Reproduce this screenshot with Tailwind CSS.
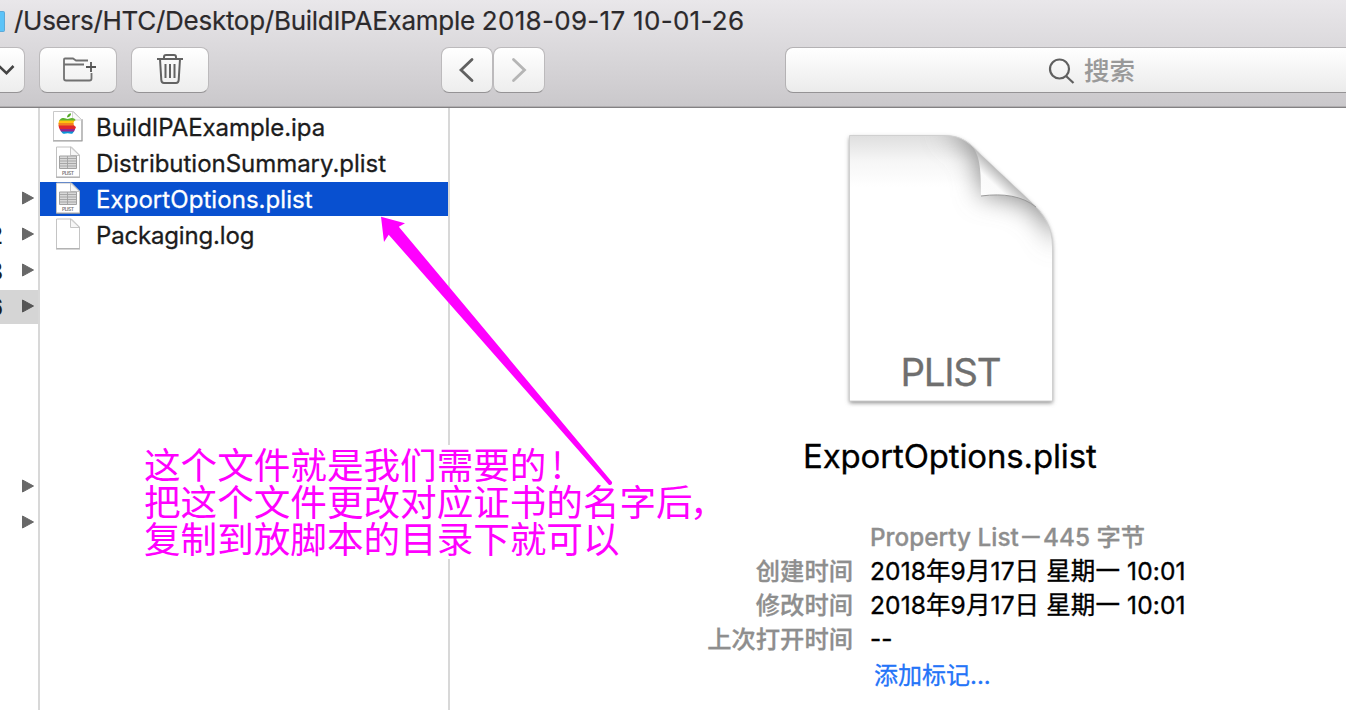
<!DOCTYPE html>
<html lang="zh-CN">
<head>
<meta charset="utf-8">
<title>BuildIPAExample</title>
<script src="https://cdn.jsdelivr.net/npm/@tailwindcss/browser@4"></script>
</head>
<body class="relative flex h-[710px] w-[1346px] flex-col overflow-hidden bg-white font-[Inter,'Noto_Sans_CJK_SC',sans-serif] text-[#1c1c1c]">

<svg class="absolute size-0">
  <defs>
    <linearGradient id="fold" x1="0" y1="1" x2="1" y2="0"><stop offset="0" stop-color="#fff"/><stop offset=".35" stop-color="#fafafa"/><stop offset=".5" stop-color="#bdbdbd"/></linearGradient>
    <symbol id="plist" viewBox="0 0 26 34">
      <path d="M1.500 1h15l8 8v22h-23z" fill="#fff" stroke="#c2c2c2"/>
      <path d="M1 31.300h24" stroke="#999" stroke-width=".8"/>
      <path d="M15.500 1v8.500h9z" fill="#f7f7f7" stroke="#b9b9b9" stroke-width=".8"/>
      <path d="M4.500 10h17v12.500h-17z" fill="#d8d8d8" stroke="#a2a2a2"/>
      <path d="M4.500 12.500h17M4.500 15h17M4.500 17.500h17M4.500 20h17M12.500 10v12" stroke="#a2a2a2" stroke-width=".9"/>
      <text x="13" y="29" text-anchor="middle" font-size="5" font-weight="600" textLength="12" fill="#777">PLIST</text>
    </symbol>
  </defs>
</svg>

<header class="flex h-[108px] shrink-0 flex-col border-b border-[#838183] bg-linear-to-b from-[#e9e7ea] to-[#cac8cb] shadow-[inset_0_-1px_0_#b0aeb0]">
  <div class="flex h-[42px] items-center">
    <span class="h-[21px] w-[5px] rounded-r-[2px] border-y border-r border-[#5da9d8] bg-[#5cc3f8]"></span>
    <span class="ml-[9px] text-[26px] leading-[42px] tracking-[-0.28px] whitespace-nowrap text-[#2c2a2c] [-webkit-text-stroke:0.2px]">/Users/HTC/Desktop/BuildIPAExample <span class="tracking-[0.3px]">2018-09-17 10-01-26</span></span>
  </div>
  <div class="flex h-[56px] items-center">
    <div class="flex h-[46px] w-[25px] items-center overflow-hidden rounded-r-[8px] border border-l-0 border-[#bcbabc] border-b-[#959395] bg-linear-to-b from-white to-[#ededed]">
      <svg class="h-[12px] w-[15px]" viewBox="0 0 15 12" fill="none" stroke="#444" stroke-width="2.600"><path d="M-1 2l7.500 7.200L13.500 2"/></svg>
    </div>
    <div class="ml-[14px] flex h-[46px] w-[78px] items-center justify-center rounded-[8px] border border-[#bcbabc] border-b-[#959395] bg-linear-to-b from-white to-[#ededed]">
      <svg class="h-[28px] w-[36px]" viewBox="0 0 36 28" fill="none" stroke="#717171" stroke-width="1.800"><path d="M28 4.500H16L13 2.500H5Q4 2.500 4 3.500V22.500Q4 24.500 6 24.500H29.500Q31.500 24.500 31.500 22.500V17M4 8.500H24"/><path d="M31 6v10M26 11h10" stroke="#555"/></svg>
    </div>
    <div class="ml-[14px] flex h-[46px] w-[78px] items-center justify-center rounded-[8px] border border-[#bcbabc] border-b-[#959395] bg-linear-to-b from-white to-[#ededed]">
      <svg class="h-[34px] w-[28px]" viewBox="0 2 28 34" fill="none" stroke="#626262" stroke-width="2"><path d="M1 8h26M8 8V6Q8 4 10 4h8Q20 4 20 6v2M4 8l1.300 21Q5.500 32 8 32h12Q22.500 32 22.700 29L24 8M9.500 13v14M14 13v14M18.500 13v14"/></svg>
    </div>
    <div class="ml-[232px] flex h-[46px] w-[52px] items-center justify-center rounded-[8px] border border-[#bcbabc] border-b-[#959395] bg-linear-to-b from-white to-[#ededed]">
      <svg class="h-[26px] w-[18px]" viewBox="0 0 18 26" fill="none" stroke="#606060" stroke-width="2.800" stroke-linecap="round"><path d="M14 2.500L3 13l11 10.500"/></svg>
    </div>
    <div class="flex h-[46px] w-[52px] items-center justify-center rounded-[8px] border border-[#bcbabc] border-b-[#959395] bg-linear-to-b from-white to-[#ededed]">
      <svg class="h-[26px] w-[18px]" viewBox="0 0 18 26" fill="none" stroke="#b5b5b5" stroke-width="2.800" stroke-linecap="round"><path d="M3.500 2.500L14.500 13 3.500 23.500"/></svg>
    </div>
    <div class="ml-[240px] flex h-[46px] w-[561px] shrink-0 items-center rounded-l-[8px] border border-r-0 border-[#b4b2b4] border-b-[#959395] bg-linear-to-b from-white to-[#ebebeb]">
      <svg class="ml-[261px] h-[30px] w-[28px]" viewBox="0 0 28 30" fill="none" stroke="#606060" stroke-width="2.200"><ellipse cx="12.500" cy="14" rx="9.500" ry="9.500"/><path d="M19 21L26.500 28"/></svg>
      <span class="mt-0.5 ml-[9px] text-[25.500px] leading-[44px] font-medium text-[#999] [-webkit-text-stroke:0.1px]">搜索</span>
    </div>
  </div>
</header>

<main class="flex min-h-0 flex-1">
  <aside class="flex w-[40px] shrink-0 flex-col overflow-hidden border-r-2 border-[#d8d8d8] pt-[74px] text-[24px] font-medium">
    <div class="flex h-[34px] items-center justify-end pr-1 pb-0.5"><svg class="h-[14px] w-[12px]" viewBox="0 0 12 14"><path d="M.5 1l11 6-11 6z" fill="#686868" stroke="#686868" stroke-linejoin="round"/></svg></div>
    <div class="mt-0.5 flex h-[34px] items-center justify-between pr-1 pb-0.5"><span class="flex w-[3px] justify-end pt-1">2</span><svg class="h-[14px] w-[12px]" viewBox="0 0 12 14"><path d="M.5 1l11 6-11 6z" fill="#686868" stroke="#686868" stroke-linejoin="round"/></svg></div>
    <div class="mt-0.5 flex h-[34px] items-center justify-between pr-1 pb-0.5"><span class="flex w-[3px] justify-end pt-1">8</span><svg class="h-[14px] w-[12px]" viewBox="0 0 12 14"><path d="M.5 1l11 6-11 6z" fill="#686868" stroke="#686868" stroke-linejoin="round"/></svg></div>
    <div class="mt-0.5 flex h-[34px] items-center justify-between bg-[#d5d5d5] pr-1 pb-0.5"><span class="flex w-[3px] justify-end pt-1">6</span><svg class="h-[14px] w-[12px]" viewBox="0 0 12 14"><path d="M.5 1l11 6-11 6z" fill="#555" stroke="#555" stroke-linejoin="round"/></svg></div>
    <div class="mt-[146px] flex h-[34px] items-center justify-end pr-1 pb-0.5"><svg class="h-[14px] w-[12px]" viewBox="0 0 12 14"><path d="M.5 1l11 6-11 6z" fill="#686868" stroke="#686868" stroke-linejoin="round"/></svg></div>
    <div class="mt-0.5 flex h-[34px] items-center justify-end pr-1 pb-0.5"><svg class="h-[14px] w-[12px]" viewBox="0 0 12 14"><path d="M.5 1l11 6-11 6z" fill="#686868" stroke="#686868" stroke-linejoin="round"/></svg></div>
  </aside>

  <section class="flex w-[410px] shrink-0 flex-col gap-0.5 border-r-2 border-[#d8d8d8] pt-0.5 text-[24px] leading-[34px] [-webkit-text-stroke:0.3px]">
    <div class="flex h-[34px] items-center">
      <svg class="ml-[12px] h-[34px] w-[32px] shrink-0" viewBox="0 0 32 34">
        <path d="M1.500 1.500h20l8.500 8.500v20.500H1.500z" fill="#fff" stroke="#c9c9c9"/><path d="M1 31h29.500M30 9v22" stroke="#999" stroke-width="1"/><path d="M20.500 1.500V10H30z" fill="#fafafa" stroke="#c9c9c9" stroke-width=".8"/>
        <clipPath id="ap"><path d="M15.500 9C17 8.800 18 7.900 20 8Q22.500 8.200 23.700 10C20.500 12 21 15.500 24 17Q22.500 21.500 20.500 23.500C18.500 24.300 17 23 15.500 23.200C14 23.400 12.500 24.500 10.500 23.300Q6.500 19 6.500 14.500C6.500 9.500 9 8 11.500 8C13.500 8 14.300 8.900 15.500 9z"/></clipPath>
        <path d="M15 7.500Q15 4 19 3.200Q19.300 6.700 15 7.500z" fill="#54ab28"/>
        <g clip-path="url(#ap)"><path d="M5 6h22v5H5z" fill="#5eb22f"/><path d="M5 10.500h22v3H5z" fill="#ffc20e"/><path d="M5 13h22v3H5z" fill="#f5821f"/><path d="M5 15.500h22v3.500H5z" fill="#e0262d"/><path d="M5 19h22v3H5z" fill="#97258d"/><path d="M5 21.500h22v4H5z" fill="#0b96d8"/></g>
      </svg>
      <span class="mt-0.5 ml-[12px] tracking-[-0.07px]">BuildIPAExample.ipa</span>
    </div>
    <div class="flex h-[34px] items-center">
      <svg class="ml-[15px] h-[34px] w-[26px] shrink-0"><use href="#plist"/></svg>
      <span class="mt-0.5 ml-[15px] tracking-[-0.03px]">DistributionSummary.plist</span>
    </div>
    <div class="flex h-[34px] items-center bg-[#0850d0] text-white">
      <svg class="ml-[15px] h-[34px] w-[26px] shrink-0"><use href="#plist"/></svg>
      <span class="mt-0.5 ml-[15px] tracking-[0.06px]">ExportOptions.plist</span>
    </div>
    <div class="flex h-[34px] items-center">
      <svg class="ml-[15px] h-[34px] w-[26px] shrink-0" viewBox="0 0 26 34"><path d="M1.500 1h15l8 8v21.500h-23z" fill="#fff" stroke="#c4c4c4"/><path d="M1 31h24" stroke="#999" stroke-width=".8"/><path d="M15.500 1v8.500h9z" fill="#f7f7f7" stroke="#b9b9b9" stroke-width=".8"/></svg>
      <span class="mt-0.5 ml-[15px] tracking-[-0.17px]">Packaging.log</span>
    </div>
  </section>

  <section class="flex flex-1 flex-col">
    <svg class="mt-[12px] ml-[380px] h-[300px] w-[240px] shrink-0" viewBox="0 0 240 300">
      <defs>
        <clipPath id="pg"><path d="M19.500 15.500H114C132 15.500 140 23 151 35L201 82C214 94 222.500 107 222.500 127V281H19.500z"/></clipPath>
        <linearGradient id="topg" x1="0" y1="0" x2="0" y2="1"><stop offset="0" stop-color="#dedede"/><stop offset=".5" stop-color="#f6f6f6"/><stop offset="1" stop-color="#fff"/></linearGradient>
        <filter id="bl" x="-50%" y="-50%" width="200%" height="200%"><feGaussianBlur stdDeviation="13"/></filter>
        <filter id="sh" x="-10%" y="-10%" width="120%" height="120%"><feGaussianBlur stdDeviation="2"/></filter>
      </defs>
      <path d="M19.500 15.500H114C132 15.500 140 23 151 35L201 82C214 94 222.500 107 222.500 127V281H19.500z" transform="translate(0 2)" fill="#8a8a8a" filter="url(#sh)"/>
      <g clip-path="url(#pg)">
        <path d="M0 0h240v300H0z" fill="#fff"/>
        <path d="M0 15h240v52H0z" fill="url(#topg)"/>
        <path d="M112 10C140 20 151 40 151 76C185 73 215 88 226 125L240 80 150 0z" fill="#8c8c8c" filter="url(#bl)"/>
      </g>
      <path d="M19.500 15.500H114C132 15.500 140 23 151 35L201 82C214 94 222.500 107 222.500 127V281H19.500z" fill="none" stroke="#d0d0d0"/>
      <path d="M143.500 28C150 38 151 50 151 76C174 73 192 76 204 85z" fill="url(#fold)"/>
      <path d="M151 76C174 73 192 76 206 87" fill="none" stroke="#999" stroke-width="1"/>
      <text x="70.500" y="266" font-size="38.500" fill="#6f6f6f" stroke="#6f6f6f" stroke-width=".3" textLength="101">PLIST</text>
    </svg>
    <h1 class="mt-[12px] ml-[353px] text-[33px] leading-[48px] tracking-[-0.15px] text-black [-webkit-text-stroke:0.3px]">ExportOptions.plist</h1>
    <dl class="mt-[40px] grid grid-cols-[403px_1fr] gap-x-[17px] text-[24.300px] leading-[34px] whitespace-nowrap text-black">
      <dt></dt><dd class="font-medium text-[#8e8e8e] [-webkit-text-stroke:0.3px]">Property List－445 字节</dd>
      <dt class="text-right font-medium text-[#8e8e8e] [-webkit-text-stroke:0.3px]">创建时间</dt><dd class="text-[24.500px] tracking-[0.12px] [-webkit-text-stroke:0.35px]">2018年9月17日 星期一 10:01</dd>
      <dt class="text-right font-medium text-[#8e8e8e] [-webkit-text-stroke:0.3px]">修改时间</dt><dd class="text-[24.500px] tracking-[0.12px] [-webkit-text-stroke:0.35px]">2018年9月17日 星期一 10:01</dd>
      <dt class="text-right font-medium text-[#8e8e8e] [-webkit-text-stroke:0.3px]">上次打开时间</dt><dd class="[-webkit-text-stroke:0.35px]">--</dd>
      <dt></dt><dd class="mt-[3px] pl-1 text-[24px] text-[#2474f8] [-webkit-text-stroke:0.3px]">添加标记...</dd>
    </dl>
  </section>
</main>

<p class="absolute top-[445px] left-[144px] bg-white pb-[3px] text-[36.600px] leading-[37px] font-normal whitespace-nowrap text-[#ff00ff] font-['Noto_Sans_CJK_SC',sans-serif]">这个文件就是我们需要的<span class="ml-[5px]">!</span><br>把这个文件更改对应证书的名字后<span class="-ml-[3px]">，</span><br>复制到放脚本的目录下就可以</p>
<svg class="absolute top-[210px] left-[370px] h-[280px] w-[250px]" viewBox="370 210 250 280"><path d="M381 216.700L405 223.300 398.800 226.700 612 482Q612.500 485 609 485L388.700 234.700 384 242z" fill="#f0f"/></svg>
</body>
</html>
